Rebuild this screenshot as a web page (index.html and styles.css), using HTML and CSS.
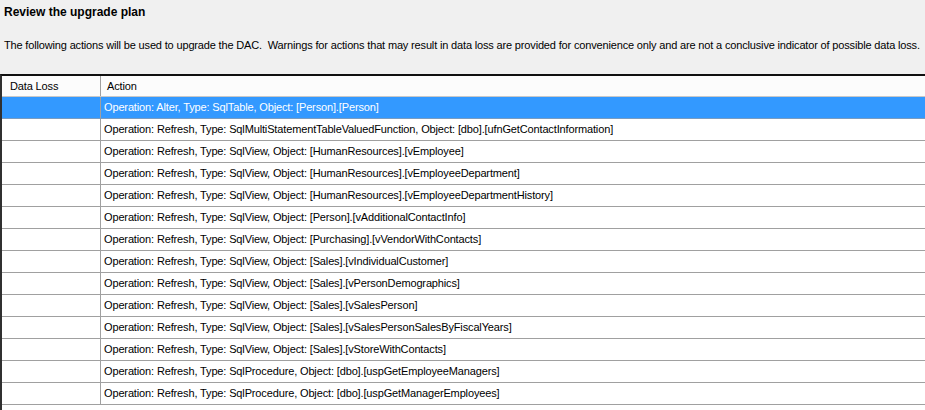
FILE: index.html
```html
<!DOCTYPE html>
<html lang="en">
<head>
  <meta charset="UTF-8" />
  <title>Review the upgrade plan</title>
  <link rel="stylesheet" href="styles.css">
</head>
<body>
  <div class="page">
    <h1 class="title">Review the upgrade plan</h1>
    <p class="intro">The following actions will be used to upgrade the DAC.&nbsp; Warnings for actions that may result in data loss are provided for convenience only and are not a conclusive indicator of possible data loss.</p>

    <div class="plan">
      <div class="plan-row plan-head">
        <div class="cell loss">Data Loss</div>
        <div class="cell action">Action</div>
      </div>
      <div class="plan-row selected">
        <div class="cell loss"></div>
        <div class="cell action">Operation: Alter, Type: SqlTable, Object: [Person].[Person]</div>
      </div>
      <div class="plan-row">
        <div class="cell loss"></div>
        <div class="cell action">Operation: Refresh, Type: SqlMultiStatementTableValuedFunction, Object: [dbo].[ufnGetContactInformation]</div>
      </div>
      <div class="plan-row">
        <div class="cell loss"></div>
        <div class="cell action">Operation: Refresh, Type: SqlView, Object: [HumanResources].[vEmployee]</div>
      </div>
      <div class="plan-row">
        <div class="cell loss"></div>
        <div class="cell action">Operation: Refresh, Type: SqlView, Object: [HumanResources].[vEmployeeDepartment]</div>
      </div>
      <div class="plan-row">
        <div class="cell loss"></div>
        <div class="cell action">Operation: Refresh, Type: SqlView, Object: [HumanResources].[vEmployeeDepartmentHistory]</div>
      </div>
      <div class="plan-row">
        <div class="cell loss"></div>
        <div class="cell action">Operation: Refresh, Type: SqlView, Object: [Person].[vAdditionalContactInfo]</div>
      </div>
      <div class="plan-row">
        <div class="cell loss"></div>
        <div class="cell action">Operation: Refresh, Type: SqlView, Object: [Purchasing].[vVendorWithContacts]</div>
      </div>
      <div class="plan-row">
        <div class="cell loss"></div>
        <div class="cell action">Operation: Refresh, Type: SqlView, Object: [Sales].[vIndividualCustomer]</div>
      </div>
      <div class="plan-row">
        <div class="cell loss"></div>
        <div class="cell action">Operation: Refresh, Type: SqlView, Object: [Sales].[vPersonDemographics]</div>
      </div>
      <div class="plan-row">
        <div class="cell loss"></div>
        <div class="cell action">Operation: Refresh, Type: SqlView, Object: [Sales].[vSalesPerson]</div>
      </div>
      <div class="plan-row">
        <div class="cell loss"></div>
        <div class="cell action">Operation: Refresh, Type: SqlView, Object: [Sales].[vSalesPersonSalesByFiscalYears]</div>
      </div>
      <div class="plan-row">
        <div class="cell loss"></div>
        <div class="cell action">Operation: Refresh, Type: SqlView, Object: [Sales].[vStoreWithContacts]</div>
      </div>
      <div class="plan-row">
        <div class="cell loss"></div>
        <div class="cell action">Operation: Refresh, Type: SqlProcedure, Object: [dbo].[uspGetEmployeeManagers]</div>
      </div>
      <div class="plan-row">
        <div class="cell loss"></div>
        <div class="cell action">Operation: Refresh, Type: SqlProcedure, Object: [dbo].[uspGetManagerEmployees]</div>
      </div>
    </div>
  </div>
</body>
</html>
```

FILE: styles.css
```css
* {
  margin: 0;
  padding: 0;
  box-sizing: border-box;
}

body {
  background: #f0f0f0;
  font-family: 'Liberation Sans', Arial, sans-serif;
  font-size: 11px;
  letter-spacing: -0.14px;
  color: #000;
  overflow: hidden;
}

.page {
  width: 925px;
  height: 410px;
  display: flex;
  flex-direction: column;
  overflow: hidden;
}

.title {
  font-size: 12px;
  font-weight: bold;
  letter-spacing: 0;
  line-height: 14px;
  padding: 5px 0 0 4px;
}

.intro {
  line-height: 14px;
  letter-spacing: -0.16px;
  padding: 19px 0 0 4px;
  white-space: nowrap;
}

.plan {
  flex: 1;
  margin-top: 22px;
  border-top: 2px solid #101010;
  border-left: 2px solid #303030;
  background: #fff;
}

.plan-row {
  display: flex;
  height: 22px;
  border-bottom: 1px solid #a0a0a0;
}

.cell {
  line-height: 21px;
  white-space: nowrap;
}

.cell.loss {
  width: 99px;
  flex: none;
  border-right: 1px solid #a0a0a0;
  padding-left: 8px;
}

.cell.action {
  flex: 1;
  padding-left: 3px;
}

.plan-head {
  height: 21px;
  background: #fcfcfc;
  border-bottom-color: #c8c8c8;
}

.plan-head .cell {
  line-height: 20px;
}

.plan-head .cell.action {
  padding-left: 6px;
}

.plan-row.selected {
  background: #3399ff;
  color: #fff;
  border-bottom-color: #7a9cc0;
}
```
